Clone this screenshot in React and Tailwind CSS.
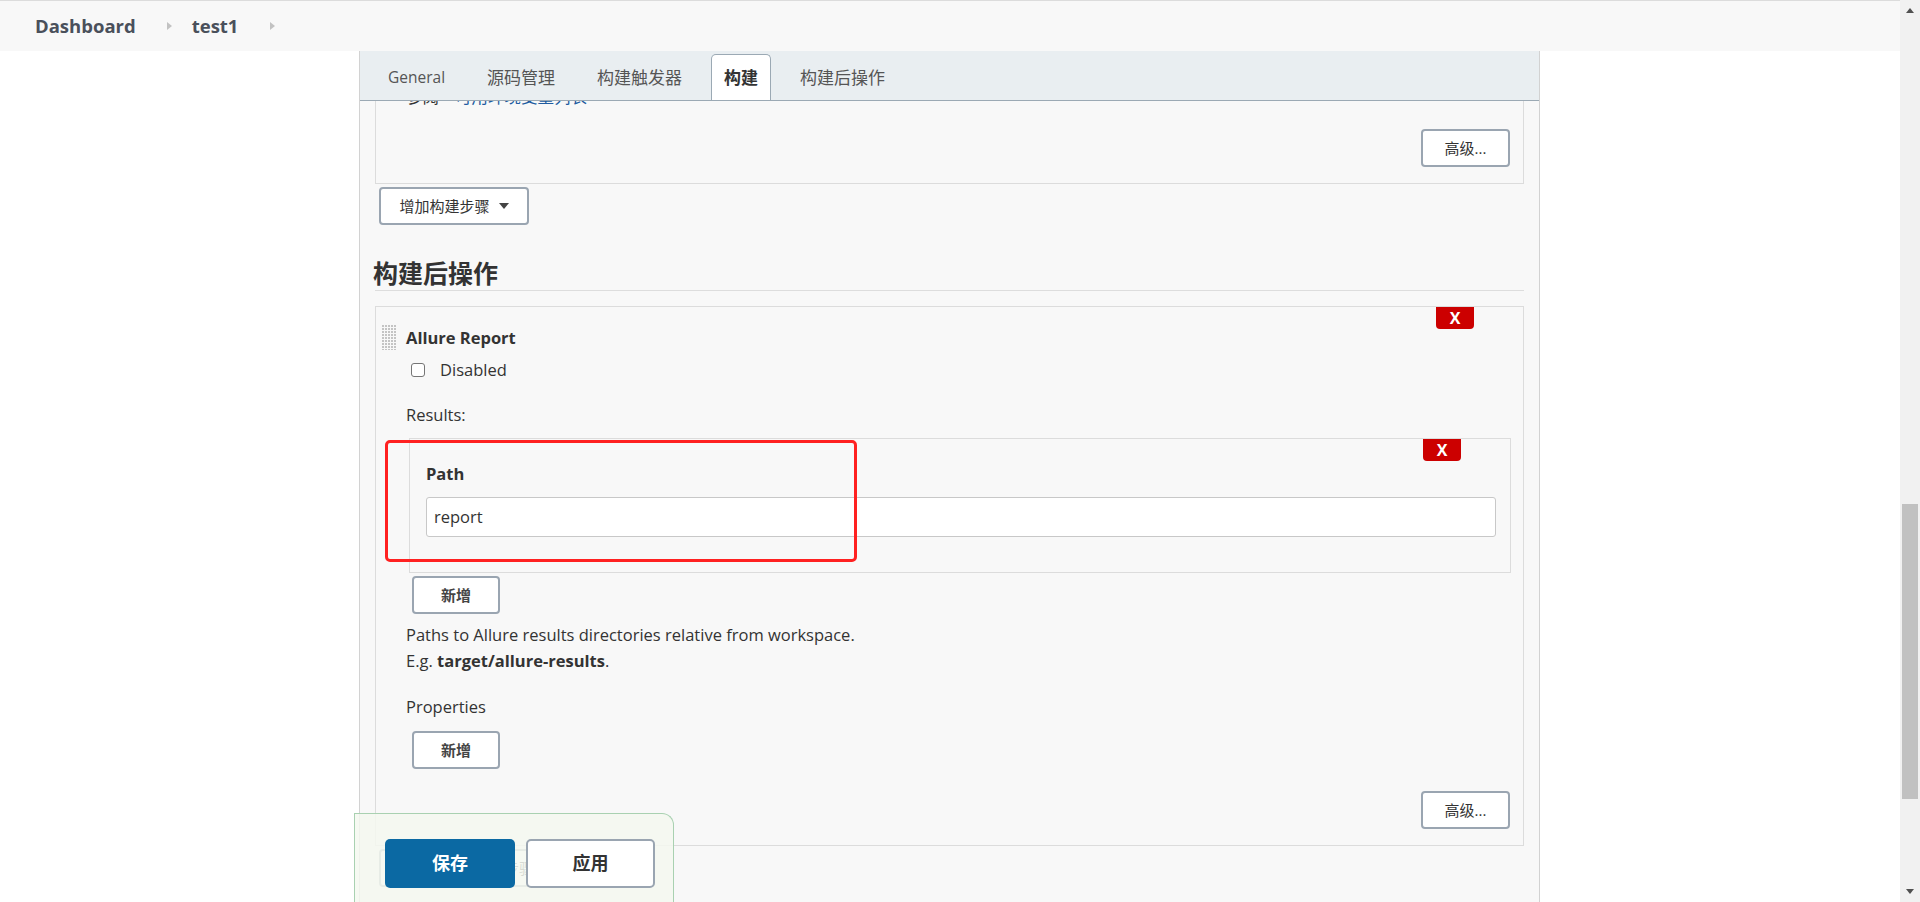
import React from "react";

const FONT = "font-['Open_Sans','Noto_Sans_CJK_SC',sans-serif]";

function DragHandle() {
  const dots = [];
  for (let r = 0; r < 9; r++) {
    for (let c = 0; c < 5; c++) {
      dots.push(<rect key={r + "-" + c} x={c * 3} y={r * 3} width="2" height="2" fill="#c4c4c4" />);
    }
  }
  return (
    <svg width="15" height="25" viewBox="0 0 15 25" className="shrink-0" shapeRendering="crispEdges">
      {dots}
    </svg>
  );
}

function GrayButton({ children, className = "" }) {
  return (
    <button
      type="button"
      className={
        "h-[38px] rounded-[4px] border-2 border-[#9aa5b1] bg-white text-[15px] text-[#333] flex items-center justify-center " +
        className
      }
    >
      {children}
    </button>
  );
}

function DeleteX({ className = "" }) {
  return (
    <div
      className={
        "absolute top-0 w-[38px] h-[22px] bg-[#cc0000] rounded-b-[4px] flex items-center justify-center text-white font-bold text-[16px] leading-none " +
        className
      }
    >
      X
    </div>
  );
}

function Caret() {
  return <span className="inline-block w-0 h-0 border-x-[5px] border-x-transparent border-t-[6px] border-t-[#444]" />;
}

export default function App() {
  return (
    <div className={"relative flex h-[902px] w-full overflow-hidden bg-white text-[#333] " + FONT}>
      <div className="flex min-w-0 flex-1 flex-col">
        {/* Breadcrumb */}
        <div className="flex h-[51px] shrink-0 items-center border-t border-[#dcdcdc] bg-[#f8f8f8] pl-[35px]">
          <span className="text-[18.5px] font-bold text-[#4a505b]">Dashboard</span>
          <span className="ml-[31px] inline-block w-0 h-0 border-y-[4px] border-y-transparent border-l-[5px] border-l-[#c2c2c2]" />
          <span className="ml-[20px] text-[18.5px] font-bold text-[#4a505b]">test1</span>
          <span className="ml-[32px] inline-block w-0 h-0 border-y-[4px] border-y-transparent border-l-[5px] border-l-[#c2c2c2]" />
        </div>

        {/* Body */}
        <div className="flex flex-1 min-h-0">
          <div className="ml-[359px] flex w-[1181px] flex-col border-x border-[#d2d2d2] bg-[#f8f8f8]">
            {/* Tabs */}
            <div className="relative z-10 flex h-[50px] shrink-0 items-end gap-4 border-b border-[#9ba9b4] bg-[#e9eef1] pl-[15px]">
              <div className="flex h-[46px] items-center rounded-t-[5px] border border-b-0 border-transparent px-3 text-[15.5px] text-[#555]">General</div>
              <div className="flex h-[46px] items-center rounded-t-[5px] border border-b-0 border-transparent px-3 text-[17px] text-[#555]">源码管理</div>
              <div className="flex h-[46px] items-center rounded-t-[5px] border border-b-0 border-transparent px-3 text-[17px] text-[#555]">构建触发器</div>
              <div className="flex h-[46px] items-center rounded-t-[5px] border border-b-0 border-[#9ba9b4] bg-white px-3 text-[17px] font-bold text-[#333]">构建</div>
              <div className="flex h-[46px] items-center rounded-t-[5px] border border-b-0 border-transparent px-3 text-[17px] text-[#555]">构建后操作</div>
            </div>

            {/* Content */}
            <div className="flex flex-col px-[15px] text-[16.5px]">
              {/* previous build step card (scrolled under the tabs) */}
              <div className="mt-[-27px] flex flex-col border border-[#dcdcdc] bg-[#f8f8f8] pb-[16px] pl-[30px] pr-[13px] pt-[9px]">
                <div className="h-[26px] leading-[26px] text-[#333]">
                  参阅<span className="ml-[16px] text-[#205ba0]">可用环境变量列表</span>
                </div>
                <div className="mt-[19px] flex justify-end">
                  <GrayButton className="w-[89px]">高级...</GrayButton>
                </div>
              </div>

              <GrayButton className="mt-[3px] ml-[4px] w-[150px] gap-[9px] self-start">
                增加构建步骤 <Caret />
              </GrayButton>

              <h2 className="mt-[33px] border-b border-[#dddddd] pb-[2px] text-[25px] font-bold leading-[30px] text-[#333]">
                <span className="ml-[-2px]">构建后操作</span>
              </h2>

              {/* Allure Report card */}
              <div className="relative mt-[15px] flex border border-[#dcdcdc] bg-[#f8f8f8] pb-[16px] pl-[6px] pr-[12px] pt-[18px]">
                <DeleteX className="right-[49px]" />
                <DragHandle />
                <div className="ml-[9px] flex flex-1 flex-col">
                  <div className="font-bold leading-[26px]">Allure Report</div>
                  <div className="mt-[6px] flex h-[26px] items-center pl-[5px]">
                    <span className="h-[14px] w-[14px] rounded-[3px] border border-[#767676] bg-white" />
                    <span className="ml-[15px] leading-[26px]">Disabled</span>
                  </div>
                  <div className="mt-[19px] leading-[26px]">Results:</div>

                  <div className="relative ml-[3px] mt-[10px] flex flex-col border border-[#dcdcdc] pb-[35px] pl-[16px] pr-[14px] pt-[22px]">
                    <DeleteX className="right-[49px]" />
                    <div className="font-bold leading-[26px]">Path</div>
                    <div className="mt-[10px] flex h-[40px] items-center rounded-[3px] border border-[#c8c8c8] bg-white px-[7px] text-[16.5px] text-[#333]">
                      report
                    </div>
                    <div className="pointer-events-none absolute left-[-25px] top-[1px] h-[122px] w-[472px] rounded-[5px] border-[3px] border-[#ff2121]" />
                  </div>

                  <GrayButton className="ml-[6px] mt-[3px] w-[88px] self-start font-semibold text-[#444]">新增</GrayButton>

                  <div className="mt-[8px] leading-[26px]">Paths to Allure results directories relative from workspace.</div>
                  <div className="leading-[26px]">
                    E.g. <span className="font-bold">target/allure-results</span>.
                  </div>

                  <div className="mt-[20px] leading-[26px]">Properties</div>
                  <GrayButton className="ml-[6px] mt-[11px] w-[88px] self-start font-semibold text-[#444]">新增</GrayButton>

                  <div className="mt-[22px] flex justify-end pr-[1px]">
                    <GrayButton className="w-[89px]">高级...</GrayButton>
                  </div>
                </div>
              </div>

              <GrayButton className="mt-[3px] ml-[4px] w-[194px] gap-[9px] self-start">
                增加构建后操作步骤 <Caret />
              </GrayButton>
            </div>
          </div>
        </div>
      </div>

      {/* Scrollbar */}
      <div className="flex w-[20px] shrink-0 flex-col bg-[#f1f1f1]">
        <div className="flex h-[21px] items-center justify-center">
          <span className="w-0 h-0 border-x-[4.5px] border-x-transparent border-b-[5px] border-b-[#505050]" />
        </div>
        <div className="h-[483px]" />
        <div className="mx-[2px] h-[295px] bg-[#c1c1c1]" />
        <div className="flex-1" />
        <div className="flex h-[21px] items-center justify-center">
          <span className="w-0 h-0 border-x-[4.5px] border-x-transparent border-t-[5px] border-t-[#505050]" />
        </div>
      </div>

      {/* Bottom sticky save bar */}
      <div className="absolute left-[354px] top-[813px] flex h-[89px] w-[320px] items-start gap-[11px] rounded-tr-[12px] border border-b-0 border-[#a9d1b1] bg-[#f5f8f0]/85 pl-[30px] pt-[25px]">
        <button type="button" className="flex h-[49px] w-[130px] items-center justify-center rounded-[5px] bg-[#0b69a3] text-[18px] font-bold text-white">
          保存
        </button>
        <button type="button" className="flex h-[49px] w-[129px] items-center justify-center rounded-[5px] border-2 border-[#9aa5b1] bg-white text-[18px] font-bold text-[#333]">
          应用
        </button>
      </div>
    </div>
  );
}
